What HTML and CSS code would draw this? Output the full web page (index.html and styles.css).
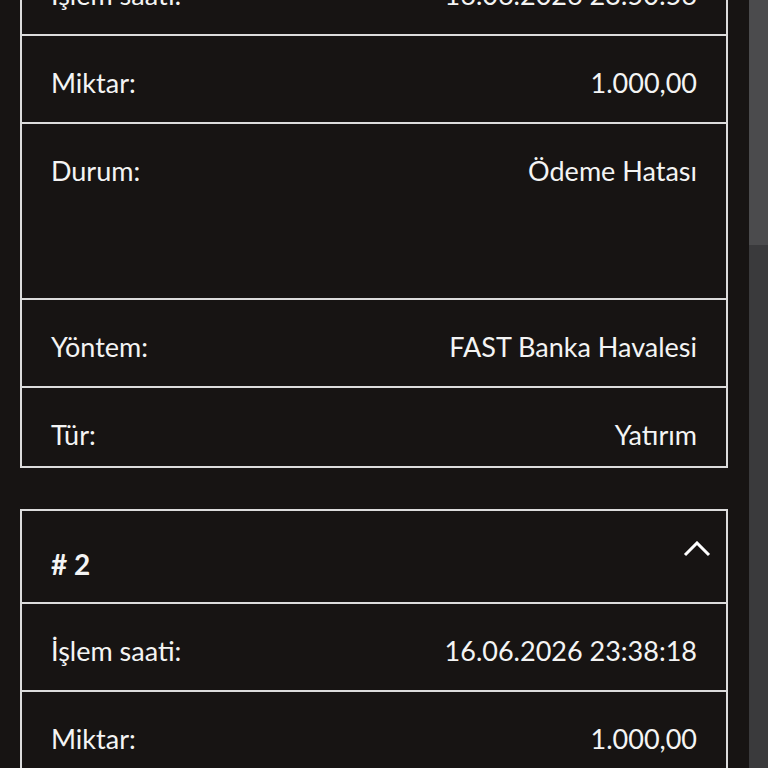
FILE: index.html
```html
<!DOCTYPE html>
<html lang="tr">
<head>
    <meta charset="UTF-8">
    <meta name="viewport" content="width=device-width, initial-scale=1.0">
    <title>İşlem Geçmişi</title>
    <link rel="stylesheet" href="styles.css">
</head>
<body>
    <main class="history">
        <section class="tx-card">
            <div class="tx-head">
                <span class="tx-no"># 1</span>
                <svg class="chevron" width="28" height="16" viewBox="0 0 28 16"><polyline points="2,14 14,2 26,14"/></svg>
            </div>
            <div class="tx-row"><span>İşlem saati:</span><span>16.06.2026 23:50:56</span></div>
            <div class="tx-row"><span>Miktar:</span><span>1.000,00</span></div>
            <div class="tx-row tx-row-tall"><span>Durum:</span><span>Ödeme Hatası</span></div>
            <div class="tx-row"><span>Yöntem:</span><span>FAST Banka Havalesi</span></div>
            <div class="tx-row"><span>Tür:</span><span>Yatırım</span></div>
        </section>

        <section class="tx-card">
            <div class="tx-head">
                <span class="tx-no"># 2</span>
                <svg class="chevron" width="28" height="16" viewBox="0 0 28 16"><polyline points="2,14 14,2 26,14"/></svg>
            </div>
            <div class="tx-row"><span>İşlem saati:</span><span>16.06.2026 23:38:18</span></div>
            <div class="tx-row"><span>Miktar:</span><span>1.000,00</span></div>
            <div class="tx-row tx-row-tall"><span>Durum:</span><span>Ödeme Hatası</span></div>
            <div class="tx-row"><span>Yöntem:</span><span>FAST Banka Havalesi</span></div>
            <div class="tx-row"><span>Tür:</span><span>Yatırım</span></div>
        </section>
    </main>

    <div class="scrollbar"><div class="scrollbar-thumb"></div></div>
</body>
</html>
```

FILE: styles.css
```css
/* Base */
html, body {
    height: 100%;
    overflow: hidden;
}

body {
    margin: 0;
    background-color: #171413;
    color: #f4f4f4;
    font-family: "Lato", "Noto Sans", sans-serif;
    font-size: 27px;
    line-height: 32px;
}

/* List, already scrolled a bit down */
.history {
    padding: 0 40px 0 20px;
    margin-top: -147px;
}

.tx-card {
    border: 2px solid #dcdcdc;
    margin-bottom: 41px;
}

.tx-head {
    display: flex;
    justify-content: space-between;
    align-items: flex-start;
    height: 61px;
    padding: 30px 15px 0 29px;
    border-bottom: 2px solid #dcdcdc;
}

.tx-no {
    font-size: 28px;
    font-weight: 700;
    margin-top: 7px;
}

.chevron {
    fill: none;
    stroke: #ffffff;
    stroke-width: 3;
}

.tx-row {
    display: flex;
    justify-content: space-between;
    align-items: flex-start;
    height: 55px;
    padding: 31px 29px 0;
    border-bottom: 2px solid #dcdcdc;
}

.tx-row-tall {
    height: 143px;
}

.tx-row:last-child {
    height: 47px;
    border-bottom: none;
}

/* Fake scrollbar on the right edge */
.scrollbar {
    position: fixed;
    top: 0;
    right: 0;
    width: 19px;
    height: 100%;
    background-color: #3a3a3c;
}

.scrollbar-thumb {
    height: 245px;
    background-color: #4b4b4d;
}
```
